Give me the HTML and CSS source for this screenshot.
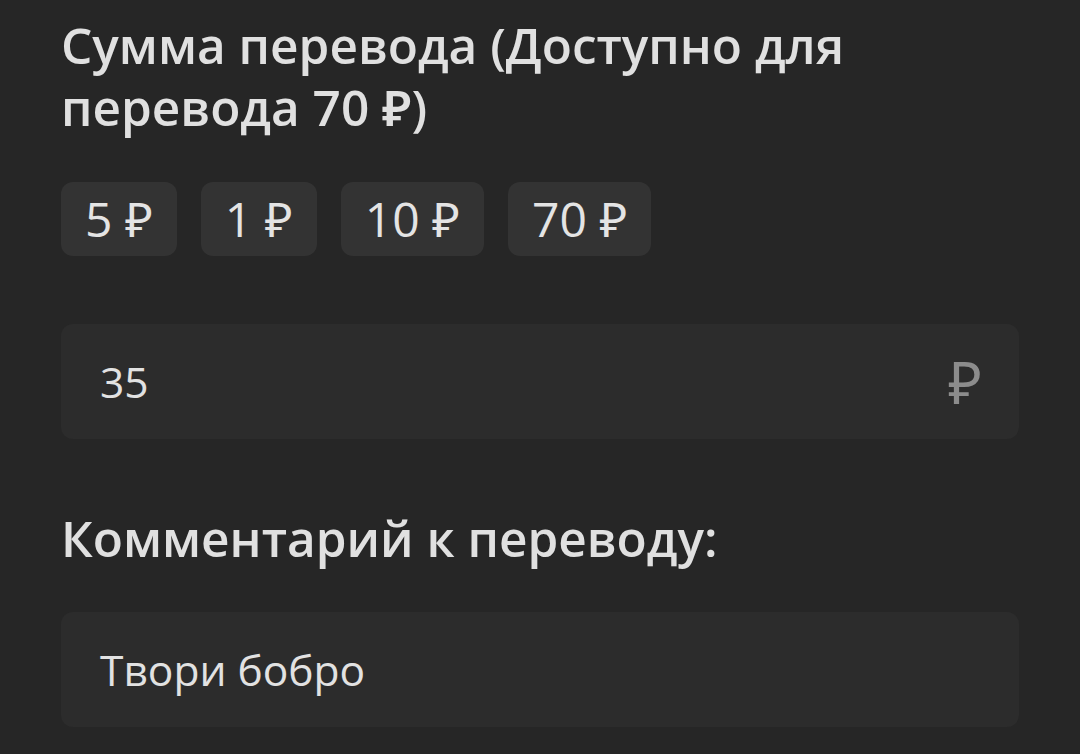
FILE: index.html
```html
<!DOCTYPE html>
<html lang="ru">
<head>
<meta charset="utf-8">
<title>Перевод</title>
<link rel="stylesheet" href="styles.css">
</head>
<body>
<main class="page">
  <h1 class="title">Сумма перевода (Доступно для перевода 70 ₽)</h1>
  <div class="chips">
    <button class="chip">5 ₽</button>
    <button class="chip">1 ₽</button>
    <button class="chip">10 ₽</button>
    <button class="chip">70 ₽</button>
  </div>
  <div class="field amount">
    <span class="field-value">35</span>
    <span class="field-suffix">₽</span>
  </div>
  <h2 class="label">Комментарий к переводу:</h2>
  <div class="field comment">
    <span class="field-value">Твори бобро</span>
  </div>
</main>
</body>
</html>
```

FILE: styles.css
```css
html, body {
  margin: 0;
  padding: 0;
  background: #262626;
  height: 100%;
}
body {
  font-family: "Open Sans", "Noto Sans", sans-serif;
  color: #e2e2e2;
  overflow: hidden;
}
.page {
  padding: 14px 61px 0 61px;
}
.title {
  margin: 0;
  font-size: 49.5px;
  line-height: 62px;
  font-weight: 600;
  color: #e0e0e0;
}
.chips {
  display: flex;
  gap: 24px;
  margin-top: 44px;
}
.chip {
  height: 74px;
  padding: 0 24px;
  border: none;
  border-radius: 12px;
  background: #333333;
  color: #e4e4e4;
  font-family: inherit;
  font-size: 48px;
  font-weight: 400;
  line-height: 74px;
}
.field {
  display: flex;
  align-items: center;
  justify-content: space-between;
  height: 115px;
  padding: 0 37px 0 39px;
  border-radius: 12px;
  background: #2c2c2c;
  font-size: 42.5px;
}
.amount {
  margin-top: 68px;
}
.field-suffix {
  color: #8c8c8c;
  font-size: 58px;
  line-height: 1;
}
.label {
  margin: 68px 0 0 0;
  font-size: 49.5px;
  line-height: 62px;
  font-weight: 600;
  color: #e0e0e0;
}
.comment {
  margin-top: 43px;
}
```
